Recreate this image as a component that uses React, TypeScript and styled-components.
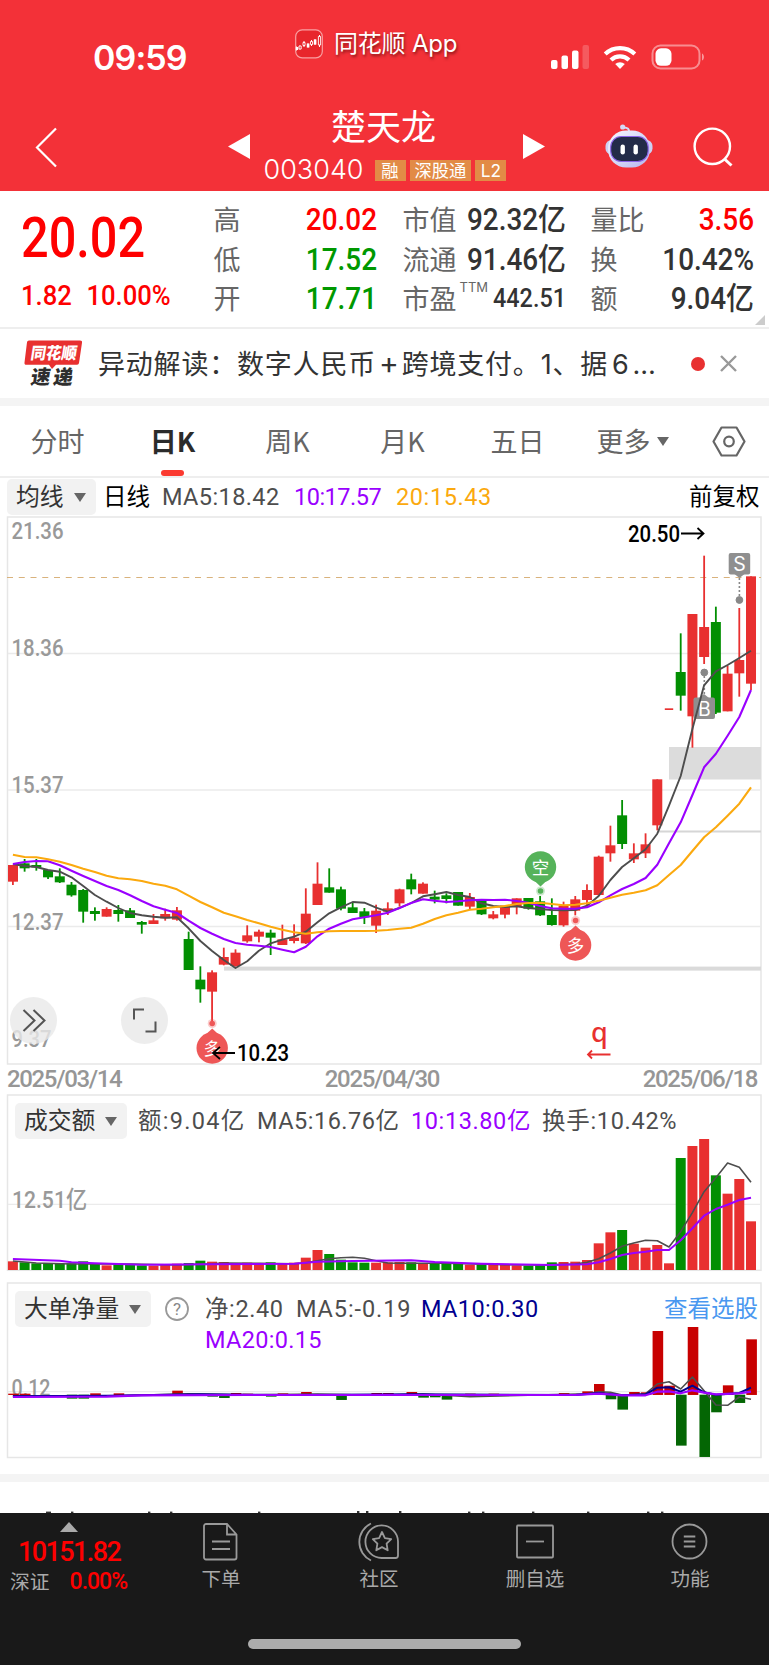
import React from 'react';
import styled, { createGlobalStyle } from 'styled-components';

const RED = '#e83030';
const GREEN = '#028f02';
const FIRST_X = 12.9 - 7;
const STEP = 11.716;
const cx = (i: number) => FIRST_X + i * STEP;

const GlobalStyle = createGlobalStyle`
  * { box-sizing: border-box; }
  body { margin: 0; background: #fff; overflow: hidden; }
  #root { width: 769px; }
`;

const Page = styled.main`
  display: flex;
  flex-direction: column;
  width: 769px;
  height: 1665px;
  overflow: hidden;
  background: #fff;
  color: #333;
  font-family: Roboto, 'Noto Sans CJK SC', sans-serif;
`;

/* ---------- header ---------- */
const Header = styled.header`
  height: 191px;
  flex: none;
  background: #f33138;
  color: #fff;
`;
const StatusBar = styled.div`
  height: 100px;
  display: grid;
  grid-template-columns: 295px 1fr 218px;
`;
const Clock = styled.div`
  padding: 37px 0 0 93px;
  font: 600 34px/42px Inter, sans-serif;
  letter-spacing: -0.9px;
`;
const AppBadge = styled.div`
  display: flex;
  align-items: center;
  gap: 11px;
  height: 88px;
  text-shadow: 1px 2px 3px rgba(60, 0, 0, 0.6);
`;
const AppName = styled.span`
  font: 400 24px/32px Inter, 'Noto Sans CJK SC', sans-serif;
  letter-spacing: -0.2px;
  white-space: nowrap;
`;
const Signals = styled.div`
  padding-top: 42px;
`;
const NavBar = styled.div`
  display: grid;
  grid-template-columns: 228px 22px 273px 22px 60px 88px 1fr;
  height: 91px;
`;
const NavCell = styled.div<{ $top: number; $left?: number }>`
  padding: ${(p) => p.$top}px 0 0 ${(p) => p.$left ?? 0}px;
`;
const TitleBlock = styled.div`
  display: flex;
  flex-direction: column;
  align-items: center;
`;
const StockName = styled.h1`
  margin: 3px 0 0 -6px;
  font: 400 35px/44px 'Noto Sans CJK SC', sans-serif;
  height: 51px;
`;
const CodeRow = styled.div`
  display: flex;
  align-items: center;
  gap: 4px;
  height: 32px;
  width: 246px;
`;
const Code = styled.span`
  font: 300 27px/30px Inter, sans-serif;
  letter-spacing: 0;
  width: 107px;
`;
const Tag = styled.span`
  height: 21px;
  padding: 0 5px;
  background: #e28b46;
  font: 400 17.3px/21px Inter, 'Noto Sans CJK SC', sans-serif;
  white-space: nowrap;
  min-width: 31px;
  text-align: center;
`;

/* ---------- quote ---------- */
const Quote = styled.section`
  position: relative;
  display: grid;
  grid-template-columns: 192px 163px 163px 163px;
  column-gap: 0;
  justify-content: start;
  height: 138px;
  padding: 8px 0 0 22px;
  border-bottom: 2px solid #eee;
  flex: none;
`;
const PriceBlock = styled.div`
  color: #fe0000;
`;
const Price = styled.div`
  font: 500 55px/64px Roboto, sans-serif;
  margin-top: 7px;
  transform: scaleX(0.885);
  transform-origin: left;
  margin-left: -1px;
`;
const Change = styled.div`
  display: flex;
  gap: 16px;
  font: 500 28px/34px Roboto, sans-serif;
  transform: scaleX(0.915);
  transform-origin: left;
  margin: 9px 0 0 -1px;
`;
const StatColumn = styled.div<{ $indent: number; $width: number }>`
  display: grid;
  grid-template-rows: repeat(3, 39.5px);
  width: ${(p) => p.$width}px;
  margin-left: ${(p) => p.$indent}px;
`;
const Stat = styled.div`
  display: flex;
  justify-content: space-between;
  align-items: center;
  white-space: nowrap;
`;
const StatLabel = styled.span`
  font: 400 27px/39px 'Noto Sans CJK SC', sans-serif;
  color: #666;
  margin-left: -0.5px;
  sup {
    display: inline-block;
    margin-left: 3px;
    font: 400 13px/14px Inter, sans-serif;
    vertical-align: 17px;
  }
`;
const StatValue = styled.span<{ $tone?: string; $small?: boolean }>`
  font: 500 ${(p) => (p.$small ? 26 : 31)}px/39px Roboto, 'Noto Sans CJK SC', sans-serif;
  color: ${(p) => p.$tone ?? '#333'};
  width: 0;
  display: flex;
  justify-content: flex-end;
  padding-top: 2px;
  transform: scaleX(0.9);
  transform-origin: right;
  i { font-style: normal; font-size: 31px; }
`;
const Corner = styled.span`
  position: absolute;
  right: 4px;
  bottom: 2px;
  border-left: 10px solid transparent;
  border-bottom: 10px solid #ccc;
`;

/* ---------- news ---------- */
const News = styled.section`
  display: flex;
  align-items: center;
  height: 69px;
  padding-left: 24px;
  flex: none;
`;
const NewsLogo = styled.div`
  width: 58px;
  height: 48px;
  margin-right: 16px;
`;
const NewsText = styled.p`
  margin: 0;
  width: 592px;
  font: 400 27px/40px Inter, 'Noto Sans CJK SC', sans-serif;
  letter-spacing: 0.8px;
  white-space: nowrap;
`;
const Plus = styled.span`
  margin: 0 2px 0 3px;
  font-size: 30px;
`;
const Six = styled.span`
  margin: 0 3px 0 4px;
`;
const Dot = styled.i`
  width: 14px;
  height: 14px;
  border-radius: 50%;
  background: ${RED};
  margin: 0 15px 0 1px;
`;
const Divider = styled.div`
  height: 8px;
  background: #f4f4f4;
  flex: none;
`;

/* ---------- tabs ---------- */
const Tabs = styled.nav`
  display: grid;
  grid-template-columns: repeat(6, 115px) 1fr;
  height: 72px;
  border-bottom: 2px solid #eee;
  flex: none;
`;
const Tab = styled.div<{ $active?: boolean }>`
  position: relative;
  display: flex;
  align-items: center;
  justify-content: center;
  gap: 6px;
  font: ${(p) => (p.$active ? 600 : 400)} 27px/40px 'Noto Sans CJK SC', sans-serif;
  color: ${(p) => (p.$active ? '#2b2b2b' : '#666')};
  &::after {
    content: '';
    display: ${(p) => (p.$active ? 'block' : 'none')};
    position: absolute;
    left: 46px;
    bottom: 0;
    width: 23px;
    height: 6px;
    border-radius: 3px;
    background: #fb3a30;
  }
  &:last-child { padding-right: 2px; }
`;
const Caret = styled.i`
  border-left: 6.5px solid transparent;
  border-right: 6.5px solid transparent;
  border-top: 9px solid #666;
`;

/* ---------- chart panels ---------- */
const Charts = styled.section`
  display: flex;
  flex-direction: column;
  padding: 0 7px;
  flex: none;
`;
const Legend = styled.div<{ $inset?: number }>`
  display: flex;
  align-items: center;
  height: 36px;
  margin: 1px 0 1px ${(p) => p.$inset ?? 0}px;
  font: 400 23.5px/36px Roboto, 'Noto Sans CJK SC', sans-serif;
  white-space: nowrap;
`;
const Chip = styled.div<{ $width: number; $after?: number }>`
  display: flex;
  flex: none;
  align-items: center;
  gap: 10px;
  width: ${(p) => p.$width}px;
  height: 36px;
  margin-right: ${(p) => p.$after ?? 0}px;
  padding-left: 9px;
  border-radius: 5px;
  background: #f2f2f2;
  color: #333;
  font-size: 23.8px;
`;
const Item = styled.span<{ $w: number; $tone?: string; $track?: number }>`
  flex: none;
  width: ${(p) => p.$w}px;
  color: ${(p) => p.$tone ?? '#4d4d4d'};
  letter-spacing: ${(p) => p.$track ?? 0}px;
`;
const Panel = styled.div<{ $h: number }>`
  position: relative;
  width: 755px;
  height: ${(p) => p.$h}px;
  svg { display: block; overflow: visible; }
`;
const Overlay = styled.div<{ $top: number }>`
  position: absolute;
  left: 0;
  right: 0;
  top: ${(p) => p.$top}px;
`;
const RoundButton = styled.button<{ $x: number }>`
  position: absolute;
  left: ${(p) => p.$x}px;
  top: 481px;
  width: 47px;
  height: 47px;
  padding: 0;
  border: 0;
  border-radius: 50%;
  background: rgba(232, 232, 232, 0.8);
`;
const Dates = styled.div`
  display: flex;
  justify-content: space-between;
  height: 29px;
  padding-right: 5px;
  font: 500 24px/29px Roboto, sans-serif;
  letter-spacing: -1.35px;
  color: #969696;
`;
const SecondLine = styled.div`
  margin-left: 198px;
  font: 400 23.5px/25px Roboto, sans-serif;
  letter-spacing: 0.3px;
  color: #9a00ff;
`;

/* ---------- bottom ---------- */
const NextSection = styled.div`
  display: flex;
  align-items: flex-end;
  height: 31px;
  flex: none;
`;
const Footer = styled.footer`
  flex: 1;
  background: #191919;
  color: #aaa;
`;
const FooterRow = styled.div`
  display: grid;
  grid-template-columns: 142px 158px 158px 154px 156px;
  height: 126px;
`;
const IndexCell = styled.div`
  display: flex;
  flex-direction: column;
  color: #fe0000;
`;
const UpArrow = styled.i`
  margin: 9px 0 0 60px;
  width: 0;
  border-left: 9px solid transparent;
  border-right: 9px solid transparent;
  border-bottom: 10px solid #aaa;
`;
const IndexValue = styled.div`
  margin: 4px 0 0 18px;
  font: 500 27px/32px Roboto, sans-serif;
  letter-spacing: -1.6px;
`;
const IndexName = styled.div`
  display: flex;
  align-items: baseline;
  gap: 20px;
  margin: -2px 0 0 10px;
  color: #aaa;
  font: 400 19.8px/30px 'Noto Sans CJK SC', sans-serif;
  b { font: 500 23px/30px Roboto, sans-serif; letter-spacing: -1px; color: #fe0000; }
`;
const Action = styled.div`
  display: flex;
  flex-direction: column;
  align-items: center;
  padding-top: 8px;
  font: 400 19.5px/28px 'Noto Sans CJK SC', sans-serif;
  svg { display: block; margin-bottom: 2px; }
`;
const HomeBar = styled.div`
  width: 273px;
  height: 10px;
  margin: 0 auto;
  border-radius: 5px;
  background: #adadad;
`;

/* ---------- data: heights are in thirds of a pixel ---------- */
type Bar = [up: number, top: number, bottom: number, high?: number, low?: number];
const shift = (by: number, rows: Bar[]): Bar[] =>
  rows.map(([u, a, b, h, l]) => [u, a + by, b + by, (h ?? a) + by, (l ?? b) + by]);
const move = (by: number, values: number[]) => values.map((v) => v + by);

const candles: Bar[] = [
  ...shift(792, [
    [1, 255, 305, 255, 315], [0, 250, 265, 237, 275], [0, 255, 262, 237, 272], [0, 270, 292, 270, 297],
    [0, 289, 307, 265, 309], [0, 314, 346, 306, 350], [0, 330, 395, 327, 428], [0, 393, 402, 382, 422],
    [1, 387, 410, 382], [0, 390, 402, 375, 425], [0, 391, 414, 384], [0, 426, 434, 423, 461],
    [1, 421, 432, 402], [1, 402, 415, 386, 422], [1, 391, 419, 381, 422], [0, 477, 570, 455],
    [0, 599, 628, 559, 668], [1, 577, 635, 571, 730], [1, 531, 554, 503, 556], [1, 518, 558, 508, 560],
    [1, 466, 484, 436, 488], [1, 455, 470, 449, 487], [0, 458, 473, 449, 525], [1, 478, 495, 434],
    [1, 473, 483, 433, 490], [1, 401, 490, 325, 492], [1, 311, 375, 247], [0, 322, 338, 265],
    [0, 328, 386, 320, 391], [0, 382, 399, 368], [0, 394, 412, 384, 432], [1, 392, 437, 374, 459],
    [1, 385, 395, 367, 405], [1, 328, 370, 326, 380], [0, 298, 328, 281, 343], [1, 311, 341, 307],
    [0, 350, 359, 332, 370], [0, 346, 357, 340, 370], [0, 336, 377], [1, 351, 380, 339, 388],
    [0, 362, 403, 357, 405], [1, 403, 415, 393, 418], [1, 377, 404, 377, 415],
  ]),
  ...shift(672, [
    [1, 475, 500, 475, 523], [0, 474, 506, 474, 509], [0, 484, 526, 468, 528], [0, 525, 555, 475, 557],
    [1, 497, 556, 485, 560], [1, 478, 512, 468, 526], [1, 450, 480, 433, 495], [1, 350, 465, 347, 467],
    [1, 316, 340, 257, 365], [0, 226, 312, 180, 327], [1, 340, 358, 310, 369], [1, 313, 340, 280, 354],
    [1, 118, 256, 118, 271],
  ]),
  ...shift(-18, [
    [1, 595, 600], [0, 486, 557, 370, 602], [1, 312, 619, 312, 713], [1, 351, 441, 137, 462],
    [0, 336, 608, 290, 612], [1, 491, 604, 467], [1, 450, 490, 294, 560], [1, 199, 521, 199, 540],
  ]),
];

const ma5 = [
  ...move(792, [252, 258, 261, 270, 275, 292, 318, 345, 365, 384, 399, 406, 410, 413, 412, 445, 483, 513, 540, 564, 544,
    512, 490, 479, 470, 455, 427, 400, 382, 366, 368, 383, 395, 384, 369, 349, 343, 336, 345, 351, 370, 378]),
  ...move(672, [501, 499, 504, 507, 510, 511, 510, 497, 468, 420, 381, 355, 328, 281, 197, 108, -33, -164, -206, -225,
    -246, -268]),
];
const ma10 = [
  ...move(792, [252, 246, 243, 244, 256, 272, 288, 303, 318, 330, 346, 363, 379, 389, 399, 422, 444, 461, 477, 489, 494,
    497, 501, 509, 517, 500, 469, 446, 431, 418, 412, 406, 398, 384, 369, 358, 362, 366, 364, 361, 359, 360]),
  ...move(672, [479, 483, 488, 498, 505, 506, 506, 502, 487, 466, 447, 432, 414, 374, 310, 247, 165, 82, 41, -13, -69,
    -150]),
];
const ma20 = [
  ...move(792, [224, 231, 232, 238, 245, 255, 266, 276, 287, 295, 298, 303, 311, 317, 328, 347, 366, 382, 398, 409, 420,
    430, 440, 449, 457, 461, 457, 454, 453, 453, 453, 452, 450, 446, 443, 431, 417, 406, 398, 389, 386, 382]),
  ...move(672, [498, 492, 489, 488, 492, 496, 494, 490, 482, 473, 464, 458, 451, 436, 405, 375, 333, 292, 262, 227, 191,
    142]),
];

const volumes = [
  514, 517, 520, 520, 522, 520, 514, 520, 526, 522, 525, 526, 527, 524, 521, 519, 512, 515, 516, 520, 518, 522, 517, 522,
  518, 503, 480, 492, 509, 517, 518, 518, 517, 516, 517, 520, 519, 521, 521, 524, 523, 525, 525, 526, 527, 525, 517, 516,
  515, 510, 460, 427, 420, 461, 473, 465, 520, 204, 168, 147, 256, 311, 267, 394,
];
const volumeUp = [
  1, 0, 0, 0, 0, 0, 0, 0, 1, 0, 0, 0, 1, 1, 1, 0, 0, 1, 1, 1, 1, 1, 0, 1, 1, 1, 1, 0, 0, 0, 0, 1, 1, 1, 0, 1, 0, 0, 0, 1,
  0, 1, 1, 1, 0, 0, 0, 1, 1, 1, 1, 1, 0, 1, 1, 1, 1, 0, 1, 1, 0, 1, 1, 1,
];
type Points = [number, number][];
const volMa5: Points = [
  [0, 513], [2, 519], [5, 522], [10, 522], [14, 525], [17, 521], [18, 519], [21, 520], [24, 521], [25, 518], [26, 512],
  [27, 506], [28, 503], [29, 502], [30, 505], [31, 512], [32, 519], [33, 520], [37, 520], [42, 524], [45, 525],
  [48, 522], [49, 517], [50, 506], [51, 489], [52, 469], [53, 459], [54, 451], [55, 452], [56, 471], [57, 425],
  [58, 368], [59, 305], [60, 263], [61, 219], [62, 232], [63, 277],
];
const volMa10: Points = [
  [0, 507], [4, 512], [5, 517], [7, 520], [11, 524], [17, 523], [24, 521], [26, 515], [29, 513], [34, 511], [36, 516],
  [40, 521], [46, 525], [49, 523], [50, 517], [51, 507], [52, 495], [53, 489], [54, 485], [55, 480], [56, 480],
  [57, 451], [58, 415], [59, 377], [60, 357], [61, 344], [62, 330], [63, 323],
];
const netBars: Points = [
  [0, 356], [1, 356], [5, 370], [6, 370], [7, 355], [9, 355], [14, 347], [17, 364], [18, 368], [19, 354], [20, 356],
  [22, 364], [23, 355], [25, 351], [28, 374], [31, 354], [32, 354], [34, 351], [35, 367], [36, 366], [37, 373],
  [39, 356], [41, 356], [47, 354], [49, 349], [50, 327], [51, 372], [52, 403], [53, 351], [54, 352], [55, 168],
  [56, 332], [57, 511], [58, 156], [59, 545], [60, 411], [61, 331], [62, 383], [63, 193],
];
const netMa5: Points = [
  [0, 362], [8, 363], [12, 359], [15, 356], [20, 360], [26, 357], [31, 361], [35, 357], [39, 365], [44, 361], [49, 356],
  [50, 350], [51, 352], [52, 360], [53, 359], [54, 356], [55, 327], [56, 320], [57, 342], [58, 306], [59, 347],
  [60, 390], [61, 391], [62, 366], [63, 373],
];
const netMa10: Points = [
  [0, 364], [8, 362], [16, 358], [24, 360], [34, 358], [48, 360], [50, 354], [52, 361], [54, 358], [55, 338], [56, 337],
  [57, 350], [58, 332], [59, 352], [60, 359], [62, 354], [63, 338],
];
const netMa20: Points = [
  [0, 366], [8, 365], [11, 361], [20, 360], [30, 360], [38, 360], [48, 360], [50, 356], [52, 361], [54, 361], [55, 350],
  [56, 349], [57, 355], [58, 346], [59, 353], [60, 358], [62, 355], [63, 350],
];

const path = (values: number[]) => values.map((v, i) => `${cx(i).toFixed(1)},${(v / 3).toFixed(1)}`).join(' ');
const sparse = (pts: Points, off: number) =>
  pts.map(([i, v]) => `${cx(i).toFixed(1)},${(v / 3 - off).toFixed(1)}`).join(' ');

const Line = ({ points, color, width = 2.1 }: { points: string; color: string; width?: number }) => (
  <polyline points={points} fill="none" stroke={color} strokeWidth={width} strokeLinejoin="round" />
);

const AxisText = ({ x, y, w, children }: { x: number; y: number; w: number; children: string }) => (
  <text x={x} y={y} fontSize={24} fontWeight={500} fill="#999" textLength={w} lengthAdjust="spacingAndGlyphs">
    {children}
  </text>
);

const Pin = ({ x, y, down, color, label }: { x: number; y: number; down?: boolean; color: string; label: string }) => (
  <g>
    <circle cx={x} cy={down ? y + 24 : y - 24.5} r={4.5} fill={color} opacity={0.3} />
    <circle cx={x} cy={down ? y + 24 : y - 24.5} r={2.8} fill={color} />
    <path
      d={down
        ? `M${x - 8} ${y + 12}L${x} ${y + 19.5}L${x + 8} ${y + 12}z`
        : `M${x - 8} ${y - 12}L${x} ${y - 19.5}L${x + 8} ${y - 12}z`}
      fill={color}
    />
    <circle cx={x} cy={y} r={15.7} fill={color} />
    <text x={x} y={y + 6.5} fontSize={17.5} fill="#fff" textAnchor="middle">{label}</text>
  </g>
);

const KChart = () => (
  <svg width="755" height="549" viewBox="0 0 755 549">
    <rect x="0.5" y="1" width="753.5" height="547" fill="#fff" stroke="#e6e6e6" strokeWidth="1.5" />
    {[137.5, 274, 410.5].map((y) => <line key={y} x1="1" x2="754" y1={y} y2={y} stroke="#ebebeb" strokeWidth="1.3" />)}
    <line x1="0" x2="754" y1="61.5" y2="61.5" stroke="#d9b27c" strokeWidth="1.2" strokeDasharray="6 5.75" />
    <rect x="217" y="450.6" width="537" height="4" fill="#dadada" />
    <rect x="652" y="314.5" width="102" height="2" fill="#d6d6d6" />
    <rect x="662" y="231" width="92" height="32.5" fill="#dcdcdc" />
    {candles.map(([up, top, bottom, high = top, low = bottom], i) => {
      const color = up ? RED : GREEN;
      const w = i === 56 ? 8.4 : 10;
      return (
        <g key={i} fill={color}>
          {i !== 56 && <rect x={cx(i) - 0.9} y={high / 3} width={1.8} height={(low - high) / 3} />}
          <rect x={Math.max(cx(i) - w / 2, 1)} y={top / 3} width={w} height={(bottom - top) / 3} />
        </g>
      );
    })}
    <g stroke="#888" fill="#888">
      <line x1="697.3" x2="697.3" y1="160" y2="182" strokeWidth="1.6" strokeDasharray="2 2" />
      <circle cx="697.3" cy="156.5" r="3.4" />
      <line x1="732.4" x2="732.4" y1="58" y2="80" strokeWidth="1.6" strokeDasharray="2 2" />
      <circle cx="732.4" cy="84" r="3.4" />
    </g>
    <rect x="686.5" y="181.5" width="21.5" height="21.5" rx="2" fill="#8f8f8f" />
    <rect x="721.7" y="37" width="21.5" height="21.5" rx="2" fill="#8f8f8f" />
    <path d="M692 182l5-4 5 4zM727.5 58l5 4 5-4z" fill="#8f8f8f" />
    <g fill="#fff" textAnchor="middle" fontSize="19.5" fontFamily="Inter">
      <text x="697.5" y="199.5">B</text>
      <text x="732.4" y="54.7">S</text>
    </g>
    <Line points={path(ma5)} color="#4d4d4d" width={1.9} />
    <Line points={path(ma10)} color="#9a00ff" />
    <Line points={path(ma20)} color="#fba90e" />
    <AxisText x={4.5} y={23} w={52}>21.36</AxisText>
    <AxisText x={4.5} y={140.3} w={52}>18.36</AxisText>
    <AxisText x={4.5} y={277.3} w={52}>15.37</AxisText>
    <AxisText x={4.5} y={414} w={52}>12.37</AxisText>
    <AxisText x={4.5} y={531.3} w={40}>9.37</AxisText>
    <Pin x={533.5} y={351} down color="#56b35a" label="空" />
    <Pin x={568.6} y={429} color="#ee5757" label="多" />
    <Pin x={205.2} y={532} color="#ee5757" label="多" />
    <g fontSize="23.5" fontWeight="500" fill="#000">
      <text x="621" y="25.5" textLength="52" lengthAdjust="spacingAndGlyphs">20.50</text>
      <text x="230" y="545" textLength="52" lengthAdjust="spacingAndGlyphs">10.23</text>
    </g>
    <g fill="none" stroke="#000" strokeWidth="1.8">
      <path d="M674 17.500H696M690.500 12l6 5.500-6 5.500" />
      <path d="M228 537H207M213 531l-7 6 7 6" />
    </g>
    <text x="584" y="526" fontSize="27" fontWeight="500" fill={RED} fontFamily="'Noto Sans'">q</text>
    <path d="M603.500 538.500H581M585 534.500l-4 4 4 4" fill="none" stroke={RED} strokeWidth="1.8" />
  </svg>
);

const VolumeChart = () => (
  <svg width="755" height="177" viewBox="0 0 755 177">
    <rect x="0.5" y="1" width="753.5" height="175.3" fill="#fff" stroke="#e6e6e6" strokeWidth="1.5" />
    <line x1="1" x2="754" y1="110.3" y2="110.3" stroke="#ebebeb" strokeWidth="1.3" />
    {volumes.map((v, i) => (
      <rect key={i} x={cx(i) - 5} y={v / 3 - 4} width={10} height={180 - v / 3} fill={volumeUp[i] ? RED : GREEN} />
    ))}
    <text x={5} y={113.5} fontSize={24} fill="#999" fontWeight={500} textLength={75} lengthAdjust="spacingAndGlyphs">12.51亿</text>
    <Line points={sparse(volMa5, 4)} color="#4d4d4d" width={1.6} />
    <Line points={sparse(volMa10, 4)} color="#9a00ff" width={2} />
  </svg>
);

const NetChart = () => (
  <svg width="755" height="176" viewBox="0 0 755 176">
    <rect x="0.5" y="1" width="753.5" height="174.5" fill="#fff" stroke="#e6e6e6" strokeWidth="1.5" />
    <line x1="1" x2="754" y1="109.7" y2="109.7" stroke="#ebebeb" strokeWidth="1.3" />
    <AxisText x={4.5} y={113.5} w={39}>0.12</AxisText>
    {netBars.map(([i, v]) => (
      <rect
        key={i}
        x={cx(i) - 4.7}
        y={Math.min(v, 359) / 3 - 7}
        width={10.6}
        height={Math.abs(v - 359) / 3 + 0.3}
        fill={v < 359 ? '#c80000' : '#046604'}
      />
    ))}
    <Line points={sparse(netMa5, 7)} color="#4d4d4d" width={1.6} />
    <Line points={sparse(netMa10, 7)} color="#00008f" width={2} />
    <Line points={sparse(netMa20, 7)} color="#9a00ff" width={2.2} />
  </svg>
);

const AppLogo = () => (
  <svg width="28" height="30" viewBox="0 0 28 30">
    <rect x="0.7" y="0.9" width="26.6" height="28" rx="6.5" fill="#e8262c" stroke="#f9a0a2" strokeWidth="1.2" />
    <path d="M1.500 17.500v4M5 16.500v4M9 12v6M13 14.500v4M16.500 11v6M20 10v6M24.500 6v12" stroke="#fff" strokeWidth="1" />
    <path d="M0.800 18h2.400v3H0.800zM11.800 14.500h2.600v4H11.800zM18.800 10.500h2.600v5h-2.600z" fill="#fff" />
    <path d="M4 17h2.200v3H4zM8 13.500h2v3H8zM15.500 12.500h2v3h-2zM23.400 7.500h2.200v8.500h-2.200z" fill="#e8262c" stroke="#fff" strokeWidth="0.9" />
  </svg>
);

const StatusIcons = () => (
  <svg width="160" height="30" viewBox="0 0 160 30" fill="#fff">
    <rect x="0" y="18" width="6.500" height="9" rx="2" />
    <rect x="10.500" y="13.500" width="6.500" height="13.500" rx="2" />
    <rect x="21" y="8.500" width="6.500" height="18.500" rx="2" />
    <rect x="31.500" y="3" width="6.500" height="24" rx="2" opacity="0.2" />
    <path d="M69 27l-4.800-4.900a7 7 0 0 1 9.600 0z" />
    <g fill="none" stroke="#fff" strokeWidth="4.200">
      <path d="M60 18a12.800 12.800 0 0 1 18 0" />
      <path d="M54.200 12a21.500 21.500 0 0 1 29.600 0" />
    </g>
    <rect x="101.500" y="3.500" width="47" height="23" rx="8" fill="none" stroke="#fff" strokeOpacity="0.45" strokeWidth="2" />
    <rect x="104.500" y="6.300" width="16" height="17.500" rx="5.500" />
    <path d="M151 11.500c2.600 1 2.600 6 0 7z" opacity="0.5" />
  </svg>
);

const Robot = () => (
  <svg width="48" height="44" viewBox="0 0 48 44">
    <defs>
      <linearGradient id="shell" x1="0" y1="0" x2="1" y2="1">
        <stop offset="0" stopColor="#f6f6ff" />
        <stop offset="0.55" stopColor="#d4d6f6" />
        <stop offset="1" stopColor="#b4b4ee" />
      </linearGradient>
    </defs>
    <path d="M24 9c0.500-4-1-5.500-5.500-5.500" fill="none" stroke="#d5d9f5" strokeWidth="2" />
    <circle cx="17.700" cy="3" r="2.600" fill="#d5d9f5" />
    <rect x="0.500" y="16" width="47" height="14.500" rx="6" fill="#ccd0f3" />
    <rect x="3" y="6.500" width="42" height="37" rx="18" fill="url(#shell)" />
    <rect x="5.700" y="12.500" width="37.500" height="25" rx="10.500" fill="#232b48" stroke="#8a63e8" strokeWidth="1.100" />
    <rect x="15.500" y="20.500" width="4.400" height="10" rx="2.200" fill="#fff" />
    <rect x="28.500" y="20.500" width="4.400" height="10" rx="2.200" fill="#fff" />
  </svg>
);

const NewsBrand = () => (
  <svg width="58" height="48" viewBox="0 0 58 48" overflow="visible">
    <path d="M5 0.500H56a2 2 0 0 1 2 2.300L55 23a2 2 0 0 1-2 1.800H32L28 29l-3-4.200H2.500a2 2 0 0 1-2-2.300L3 2.300A2 2 0 0 1 5 .5z" fill={RED} />
    <g transform="skewX(-9)" fontFamily="'Noto Sans CJK SC'" fontWeight="900">
      <text x="9" y="19" fontSize="16.500" fill="#fff" textLength="46" lengthAdjust="spacingAndGlyphs">同花顺</text>
      <text x="13" y="44.500" fontSize="19.500" fill="#2e2e2e" textLength="42">速递</text>
    </g>
  </svg>
);

/* tops of the next card's title, hidden behind the footer */
const TitleTops = () => (
  <svg width="769" height="2" viewBox="0 0 769 2" fill="#333">
    {[46, 71, 148, 170, 258, 357, 366, 399, 468, 482, 532, 587, 647, 661].map((x) => (
      <rect key={x} x={x} y={x > 350 && x < 400 ? 0 : 0.6} width={x === 46 ? 5 : 2.400} height={2} />
    ))}
  </svg>
);

const App = () => (
  <>
    <GlobalStyle />
    <Page>
      <Header>
        <StatusBar>
          <Clock>09:59</Clock>
          <AppBadge>
            <AppLogo />
            <AppName>同花顺 App</AppName>
          </AppBadge>
          <Signals><StatusIcons /></Signals>
        </StatusBar>
        <NavBar>
          <NavCell $top={27} $left={35}>
            <svg width="22" height="41" viewBox="0 0 22 41"><path d="M21 1.500L2 20.500l19 19" fill="none" stroke="#fff" strokeWidth="2.200" /></svg>
          </NavCell>
          <NavCell $top={34}>
            <svg width="22" height="25" viewBox="0 0 22 25"><path d="M22 0v25L0 12.500z" fill="#fff" /></svg>
          </NavCell>
          <TitleBlock>
            <StockName>楚天龙</StockName>
            <CodeRow>
              <Code>003040</Code>
              <Tag>融</Tag>
              <Tag>深股通</Tag>
              <Tag>L2</Tag>
            </CodeRow>
          </TitleBlock>
          <NavCell $top={34}>
            <svg width="22" height="25" viewBox="0 0 22 25"><path d="M0 0v25l22-12.500z" fill="#fff" /></svg>
          </NavCell>
          <span />
          <NavCell $top={24}><Robot /></NavCell>
          <NavCell $top={27}>
            <svg width="41" height="40" viewBox="0 0 41 40" fill="none" stroke="#fff" strokeWidth="2.400">
              <circle cx="19.300" cy="19.300" r="17.700" /><path d="M31.500 32l7 6.500" strokeWidth="3" />
            </svg>
          </NavCell>
        </NavBar>
      </Header>

      <Quote>
        <PriceBlock>
          <Price>20.02</Price>
          <Change><span>1.82</span><span>10.00%</span></Change>
        </PriceBlock>
        <StatColumn $indent={0} $width={163}>
          <Stat><StatLabel>高</StatLabel><StatValue $tone="#fe0000">20.02</StatValue></Stat>
          <Stat><StatLabel>低</StatLabel><StatValue $tone="#009800">17.52</StatValue></Stat>
          <Stat><StatLabel>开</StatLabel><StatValue $tone="#009800">17.71</StatValue></Stat>
        </StatColumn>
        <StatColumn $indent={26} $width={163}>
          <Stat><StatLabel>市值</StatLabel><StatValue>92.32<i>亿</i></StatValue></Stat>
          <Stat><StatLabel>流通</StatLabel><StatValue>91.46<i>亿</i></StatValue></Stat>
          <Stat><StatLabel>市盈<sup>TTM</sup></StatLabel><StatValue $small>442.51</StatValue></Stat>
        </StatColumn>
        <StatColumn $indent={51} $width={163}>
          <Stat><StatLabel>量比</StatLabel><StatValue $tone="#fe0000">3.56</StatValue></Stat>
          <Stat><StatLabel>换</StatLabel><StatValue>10.42%</StatValue></Stat>
          <Stat><StatLabel>额</StatLabel><StatValue>9.04<i>亿</i></StatValue></Stat>
        </StatColumn>
        <Corner />
      </Quote>

      <News>
        <NewsLogo><NewsBrand /></NewsLogo>
        <NewsText>异动解读：数字人民币<Plus>+</Plus>跨境支付。1、据<Six>6</Six>…</NewsText>
        <Dot />
        <svg width="17" height="17" viewBox="0 0 17 17"><path d="M1 1l15 15M16 1L1 16" stroke="#999" strokeWidth="2.400" /></svg>
      </News>
      <Divider />

      <Tabs>
        <Tab>分时</Tab>
        <Tab $active>日K</Tab>
        <Tab>周K</Tab>
        <Tab>月K</Tab>
        <Tab>五日</Tab>
        <Tab>更多<Caret /></Tab>
        <Tab>
          <svg width="34" height="31" viewBox="0 0 34 31" fill="none" stroke="#666" strokeWidth="2.200">
            <path d="M9.500 1.500h15L32.500 15.500l-8 14h-15L1.500 15.500z" strokeLinejoin="round" /><circle cx="17" cy="15.500" r="4.800" />
          </svg>
        </Tab>
      </Tabs>

      <Charts>
        <Legend>
          <Chip $width={89} $after={7}>均线<Caret /></Chip>
          <Item $w={59} $tone="#000">日线</Item>
          <Item $w={132} $track={0.4}>MA5:18.42</Item>
          <Item $w={102} $tone="#9a00ff" $track={-0.5}>10:17.57</Item>
          <Item $w={293} $tone="#fba90e" $track={0.6}>20:15.43</Item>
          <Item $w={71} $tone="#000">前复权</Item>
        </Legend>
        <Panel $h={549}>
          <KChart />
          <RoundButton $x={3}>
            <svg width="47" height="47" viewBox="0 0 47 47" fill="none" stroke="#555" strokeWidth="2"><path d="M13.500 13l11 10.500-11 10.500M23.500 13l11 10.500-11 10.500" /></svg>
          </RoundButton>
          <RoundButton $x={114}>
            <svg width="47" height="47" viewBox="0 0 47 47" fill="none" stroke="#555" strokeWidth="2"><path d="M13 22.500V12.500H23M34.500 24.500V34.500H24.500" /></svg>
          </RoundButton>
        </Panel>
        <Dates><span>2025/03/14</span><span>2025/04/30</span><span>2025/06/18</span></Dates>
        <Panel $h={188}>
          <VolumeChart />
          <Overlay $top={8}>
            <Legend $inset={8}>
              <Chip $width={112} $after={11}>成交额<Caret /></Chip>
              <Item $w={119} $track={1.3}>额:9.04亿</Item>
              <Item $w={154} $track={0.5}>MA5:16.76亿</Item>
              <Item $w={131} $tone="#9a00ff" $track={0.6}>10:13.80亿</Item>
              <Item $w={140} $track={0.7}>换手:10.42%</Item>
            </Legend>
          </Overlay>
        </Panel>
        <Panel $h={192}>
          <NetChart />
          <Overlay $top={8}>
            <Legend $inset={8}>
              <Chip $width={136}>大单净量<Caret /></Chip>
              <svg width="54" height="26" viewBox="0 0 54 26">
                <circle cx="26" cy="13" r="11" fill="none" stroke="#999" strokeWidth="1.800" />
                <text x="26" y="19" fontSize="17" fill="#888" textAnchor="middle">?</text>
              </svg>
              <Item $w={91} $track={0.6}>净:2.40</Item>
              <Item $w={125} $track={0.9}>MA5:-0.19</Item>
              <Item $w={243} $tone="#00008f" $track={0.4}>MA10:0.30</Item>
              <Item $w={94} $tone="#4a98f0">查看选股</Item>
            </Legend>
            <SecondLine>MA20:0.15</SecondLine>
          </Overlay>
        </Panel>
      </Charts>
      <Divider />
      <NextSection><TitleTops /></NextSection>

      <Footer>
        <FooterRow>
          <IndexCell>
            <UpArrow />
            <IndexValue>10151.82</IndexValue>
            <IndexName>深证<b>0.00%</b></IndexName>
          </IndexCell>
          <Action>
            <svg width="42" height="41" viewBox="0 0 42 41" fill="none" stroke="#999" strokeWidth="1.800">
              <path d="M6 3h21l9.500 10.500V36.500a2 2 0 0 1-2 2H6a2 2 0 0 1-2-2V5a2 2 0 0 1 2-2zM27 3v10.500h9.500M12 20.500h18M12 28h18" />
            </svg>
            下单
          </Action>
          <Action>
            <svg width="42" height="41" viewBox="0 0 42 41" fill="none" stroke="#999" strokeWidth="1.800">
              <path d="M40 20.500V34.500a2.500 2.500 0 0 1-2.500 2.500H24a16.300 16.300 0 1 1 16-16.500z" />
              <path d="M13 2.500a20.500 20.500 0 0 0 0 37" />
              <path d="M24 11l2.900 6.200 6.300.9-4.600 4.600 1.100 6.600-5.700-3.200-5.700 3.200 1.100-6.600-4.600-4.600 6.300-.9z" strokeLinejoin="round" />
            </svg>
            社区
          </Action>
          <Action>
            <svg width="42" height="41" viewBox="0 0 42 41" fill="none" stroke="#999" strokeWidth="1.800">
              <rect x="3" y="4.500" width="36" height="32" rx="1" /><path d="M12 20.500h18" />
            </svg>
            删自选
          </Action>
          <Action>
            <svg width="42" height="41" viewBox="0 0 42 41" fill="none" stroke="#999" strokeWidth="1.800">
              <circle cx="20.500" cy="20.500" r="17" /><path d="M14.800 15.500h11.500M14.800 20.500h11.500M14.800 25.500h11.500" />
            </svg>
            功能
          </Action>
        </FooterRow>
        <HomeBar />
      </Footer>
    </Page>
  </>
);

export default App;
